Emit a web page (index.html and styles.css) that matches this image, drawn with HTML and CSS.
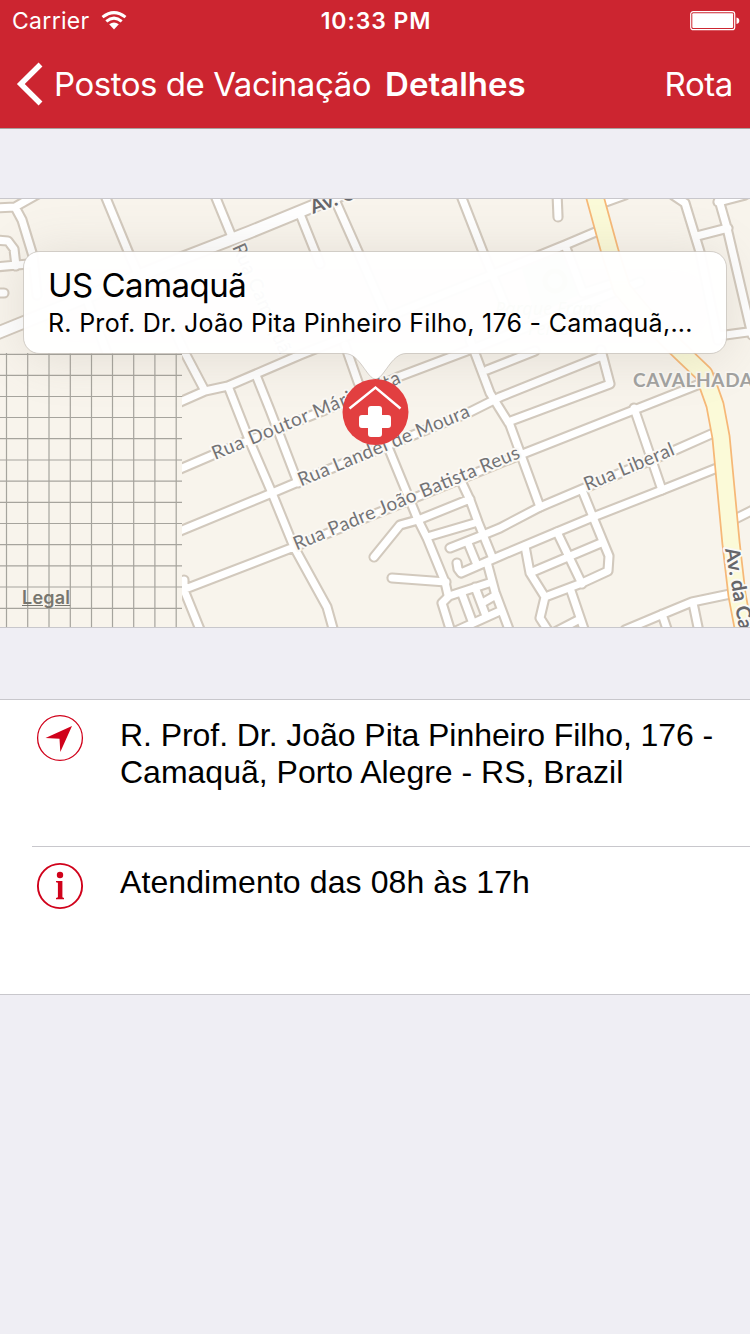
FILE: index.html
```
<!DOCTYPE html>
<html lang="pt-BR">
<head>
<meta charset="utf-8">
<title>Detalhes</title>
<link rel="stylesheet" href="styles.css">
</head>
<body>
<header class="header">
  <div class="status">
    <div class="carrier"><span class="carrier-name">Carrier</span>
      <svg class="wifi" width="26" height="20" viewBox="0 0 26 20"><g fill="none" stroke="#fff" stroke-width="3"><path d="M1.5 6.2Q13 -3 24.500 6.200"/><path d="M5.300 10.300Q13 4 20.700 10.300"/></g><path fill="#fff" d="M8.200 13.300Q13 9.800 17.800 13.300L13 18.500Z"/></svg>
    </div>
    <div class="clock">10:33 PM</div>
    <svg class="battery" width="50" height="20" viewBox="0 0 50 20"><rect x=".7" y=".7" width="44" height="18" rx="2.500" fill="none" stroke="#fff" stroke-width="1.200"/><rect x="2.300" y="2.300" width="40.800" height="14.800" rx="1" fill="#fff"/><path d="M46.500 6.500Q49.300 7 49.300 9.800T46.500 13Z" fill="#fff"/></svg>
  </div>
  <nav class="nav">
    <svg class="chevron" width="28" height="44" viewBox="0 0 28 44"><path d="M24.500 2.500L4.800 22L24.500 41.500" fill="none" stroke="#fff" stroke-width="5.500"/></svg>
    <span class="back">Postos de Vacinação</span>
    <span class="title">Detalhes</span>
    <span class="route">Rota</span>
  </nav>
</header>
<main>
<section class="map">
<svg class="tiles" viewBox="0 199 750 428" width="750" height="428">
  <defs>
    <filter id="soft" x="-20%" y="-60%" width="140%" height="240%"><feGaussianBlur stdDeviation="24"/></filter>
    <g id="streets">
      <path d="M-5 208L15 207L45 190M15 207L22 220L33 256L37 295M-5 240L8 241L14 249L16 266M-5 267L28 264M-5 293L4 293M104 193L130 256L142 283M87 300L107 353M214 193L232 237M300 214L320 264M336 202L360 256L384 311M460 193L483 252L505 305M557 193L558 217"/>
      <path d="M172 325L185 353L205 391M180 402L205 391L228 386L300 355L350 335M228 386L250 442L272 493L294 547L327 607L334 632M256 375L270 410L298 483M345 345L358 382L388 447L418 520L427 538L445 582L448 595M180 469L215 454L345 402L398 377L480 346L640 282M180 531L272 493L298 482L470 412L500 397L602 356M470 340L490 393L510 425L540 507M487 370L535 351M601 350L610 384L508 422M180 591L294 547L520 455L634 410L715 378M634 408L662 490M184 580L184 590L201 632"/>
      <path d="M374 557L400 525L418 520L470 499M427 537L478 522M462 483L470 500L478 522L493 559M450 548L483 535L500 528L540 507L580 490L673 451L718 431M468 543L477 565M457 563L458 569L461 573L500 556L557 532L593 517L662 490L722 466M392 578L446 582M487 562L495 592L510 632M451 632L442 603L449 596L492 582M458 630L500 611M462 594L472 621M475 587L486 616M484 602L496 595"/>
      <path d="M525 546L530 573L545 597L540 618L549 632M530 573L601 543M557 532L582 584M582 490L593 517L609 556L608 571L582 583L545 597M570 588L585 632M555 632L580 619M625 630L663 614L692 602L735 593M662 614L668 632M693 603L699 632M735 519L757 508"/>
      <path d="M598 231L565 245L390 316M565 245L583 293L620 281M603 203L625 195M673 195L685 203L700 252L718 340M717 193L727 228L752 335M697 236L728 228M718 336L755 331M718 202L745 195"/>
    </g>
    <path id="avenue" d="M-5 334L180 259L250 232L350 191"/>
    <path id="main-road" d="M593 190L610 252L622 289L648 320L682 353L704 374L715 405L721 437L731 543L737 595L744 632"/>
  </defs>
  <rect y="199" width="750" height="428" class="land"/>
  <path d="M520 262L570 245L583 293L535 315Z" fill="#cfe3bd"/>
  <use href="#streets" class="case"/><use href="#avenue" class="avenue-case"/>
  <use href="#streets" class="road"/><use href="#avenue" class="avenue"/>
  <use href="#main-road" class="main-case"/><use href="#main-road" class="main-fill"/>
  <rect x="0" y="353" width="182" height="274" class="land"/>
  <path class="grid" d="M6.500 353V627M27.700 353V627M49 353V627M70.300 353V627M91.500 353V627M112.500 353V627M133.700 353V627M154.900 353V627M176.200 353V627M0 354.300H182M0 375.400H182M0 396.500H182M0 417.500H182M0 438.700H182M0 460H182M0 481.200H182M0 502.400H182M0 523.500H182M0 544.600H182M0 565.800H182M0 587H182M0 608.300H182"/>
  <g class="street-label">
    <text transform="translate(215 460) rotate(-22.500)" textLength="202">Rua Doutor Mário Pita</text>
    <text transform="translate(301 486.500) rotate(-22.500)" textLength="184">Rua Landel de Moura</text>
    <text transform="translate(296.500 550.500) rotate(-22.500)" textLength="243">Rua Padre João Batista Reus</text>
    <text transform="translate(587 491) rotate(-22.500)" textLength="96">Rua Liberal</text>
    <text transform="translate(232 247) rotate(66)" textLength="118">Rua Camaquã</text>
    <text class="strong" transform="translate(313 214) rotate(-20)">Av. Otto</text>
    <text class="strong" transform="translate(725 549) rotate(80)">Av. da Cavalhada</text>
  </g>
  <text class="district" x="633" y="387" textLength="120">CAVALHADA</text>
  <circle cx="555" cy="281" r="10" fill="none" stroke="#a3c38c" stroke-width="5"/>
  <g class="park"><text x="495" y="315">Parque Franc</text><text x="528" y="335">Ferest</text></g>
  <rect x="20" y="250" width="710" height="112" rx="30" fill="#857b70" opacity=".17" filter="url(#soft)"/>
  <path class="bubble" d="M40 251.500H710A16 16 0 0 1 726.500 268V337A16 16 0 0 1 710 353.500H406C391 353.500 384 379 375.500 379S360 353.500 345 353.500H40A16 16 0 0 1 23.500 337V268A16 16 0 0 1 40 251.500Z"/>
  <circle cx="375.500" cy="412" r="33" fill="#e23f40"/>
  <path d="M349.500 408.500L375.500 387.500L400.500 408.500" fill="none" stroke="#fff" stroke-width="2.500"/>
  <path d="M372 406H379A3 3 0 0 1 382 409V415H388A3 3 0 0 1 391 418V425A3 3 0 0 1 388 428H382V434A3 3 0 0 1 379 437H371A3 3 0 0 1 368 434V428H362A3 3 0 0 1 359 425V418A3 3 0 0 1 362 415H368V409A3 3 0 0 1 371 406Z" fill="#fff"/>
</svg>
<div class="callout"><div class="name">US Camaquã</div><div class="addr">R. Prof. Dr. João Pita Pinheiro Filho, 176 - Camaquã,...</div></div>
<a class="legal">Legal</a>
</section>
<section class="list">
  <div class="row">
    <svg class="icon" width="48" height="48" viewBox="0 0 48 48"><circle cx="24" cy="24" r="22.400" fill="none" stroke="#d0021b" stroke-width="1.300"/><path d="M36 12L24.300 38L23.500 24.800L9.500 24Z" fill="#d0021b"/></svg>
    <p class="text"><span class="tight">R. Prof. Dr. João Pita Pinheiro Filho, 176 -</span><br>Camaquã, Porto Alegre - RS, Brazil</p>
  </div>
  <div class="row ruled">
    <svg class="icon info" width="48" height="48" viewBox="0 0 48 48"><circle cx="24" cy="24" r="22.100" fill="none" stroke="#d0021b" stroke-width="1.900"/><circle cx="24" cy="13" r="3.200" fill="#d0021b"/><path d="M20 19H26.400V35.200L28 36V37.300H20V36L21.900 35.200V20.800L20 20.300Z" fill="#d0021b"/></svg>
    <p class="text wide">Atendimento das 08h às 17h</p>
  </div>
</section>
</main>
</body>
</html>
```
FILE: styles.css
```
body { margin: 0; width: 750px; height: 1334px; overflow: hidden; background: #efeef4; font-family: Inter, "Noto Sans", sans-serif; color: #000; }
.header { box-sizing: border-box; height: 129px; background: #cc2530; border-bottom: 1px solid #a8a29f; color: #fff; }
.status { height: 42px; display: grid; grid-template-columns: 1fr auto 1fr; align-items: center; padding: 0 10px 0 12px; font-size: 23px; }
.carrier { display: flex; align-items: center; gap: 11px; }
.carrier-name { letter-spacing: .3px; }
.wifi { display: block; }
.clock { font-weight: 600; letter-spacing: .9px; }
.battery { justify-self: end; }
.nav { height: 84px; display: flex; align-items: center; padding: 0 17px 0 16px; font-size: 33px; white-space: nowrap; }
.chevron { flex: none; }
.back { margin-left: 10px; letter-spacing: -.46px; }
.title { margin-left: 14px; font-weight: 600; }
.route { margin-left: auto; letter-spacing: -.4px; }
.map { position: relative; margin-top: 69px; height: 428px; border-top: 1px solid #c8c7cc; border-bottom: 1px solid #c8c7cc; overflow: hidden; }
.tiles { display: block; }
.land { fill: #f8f4ec; }
.case, .avenue-case { fill: none; stroke: #d2c9bd; stroke-width: 11.200; stroke-linecap: round; stroke-linejoin: round; }
.road, .avenue { fill: none; stroke: #fff; stroke-width: 7; stroke-linecap: round; stroke-linejoin: round; }
.avenue-case { stroke-width: 14.500; }
.avenue { stroke-width: 10.500; }
.main-case, .main-fill { fill: none; stroke-linejoin: round; }
.main-case { stroke: #f6b877; stroke-width: 19; }
.main-fill { stroke: #fbfad8; stroke-width: 15.500; }
.grid { fill: none; stroke: #a6a49d; stroke-width: 1.200; }
.street-label { font: 19px Lato, sans-serif; fill: #737376; stroke: #fbf9f5; stroke-width: 4px; stroke-linejoin: round; paint-order: stroke; }
.strong { font-weight: 700; font-size: 20px; fill: #66666a; }
.district { font: 700 19px Lato, sans-serif; fill: #a2a2a0; stroke: #fbf9f5; stroke-width: 3px; paint-order: stroke; }
.park { font: italic 18px "Noto Sans", sans-serif; fill: #7da568; }
.bubble { fill: #fff; fill-opacity: .97; stroke: #b9b2aa; stroke-opacity: .6; stroke-width: 1; }
.callout { position: absolute; left: 24px; top: 53px; width: 654px; height: 101px; padding: 0 24px; white-space: nowrap; }
.name { margin-top: 12px; font-size: 33px; line-height: 42px; letter-spacing: -.5px; }
.addr { font-size: 25px; line-height: 34px; letter-spacing: .27px; }
.legal { position: absolute; left: 22px; top: 387px; font-size: 18px; line-height: 24px; font-weight: 600; letter-spacing: .2px; color: #77766f; text-decoration: underline; }
.list { margin-top: 71px; background: #fff; border-top: 1px solid #c8c7cc; border-bottom: 1px solid #c8c7cc; }
.row { position: relative; display: flex; box-sizing: border-box; height: 147px; padding: 14px 0 0 36px; gap: 36px; }
.ruled::before { content: ""; position: absolute; left: 32px; right: 0; top: -1px; height: 1px; background: #c8c7cc; }
.icon { flex: none; }
.info { margin-top: 1px; }
.text { margin: 3px 0 0; font: 32px/37px "Liberation Sans", sans-serif; white-space: nowrap; }
.tight { letter-spacing: -.06px; }
.wide { letter-spacing: .1px; }
```
